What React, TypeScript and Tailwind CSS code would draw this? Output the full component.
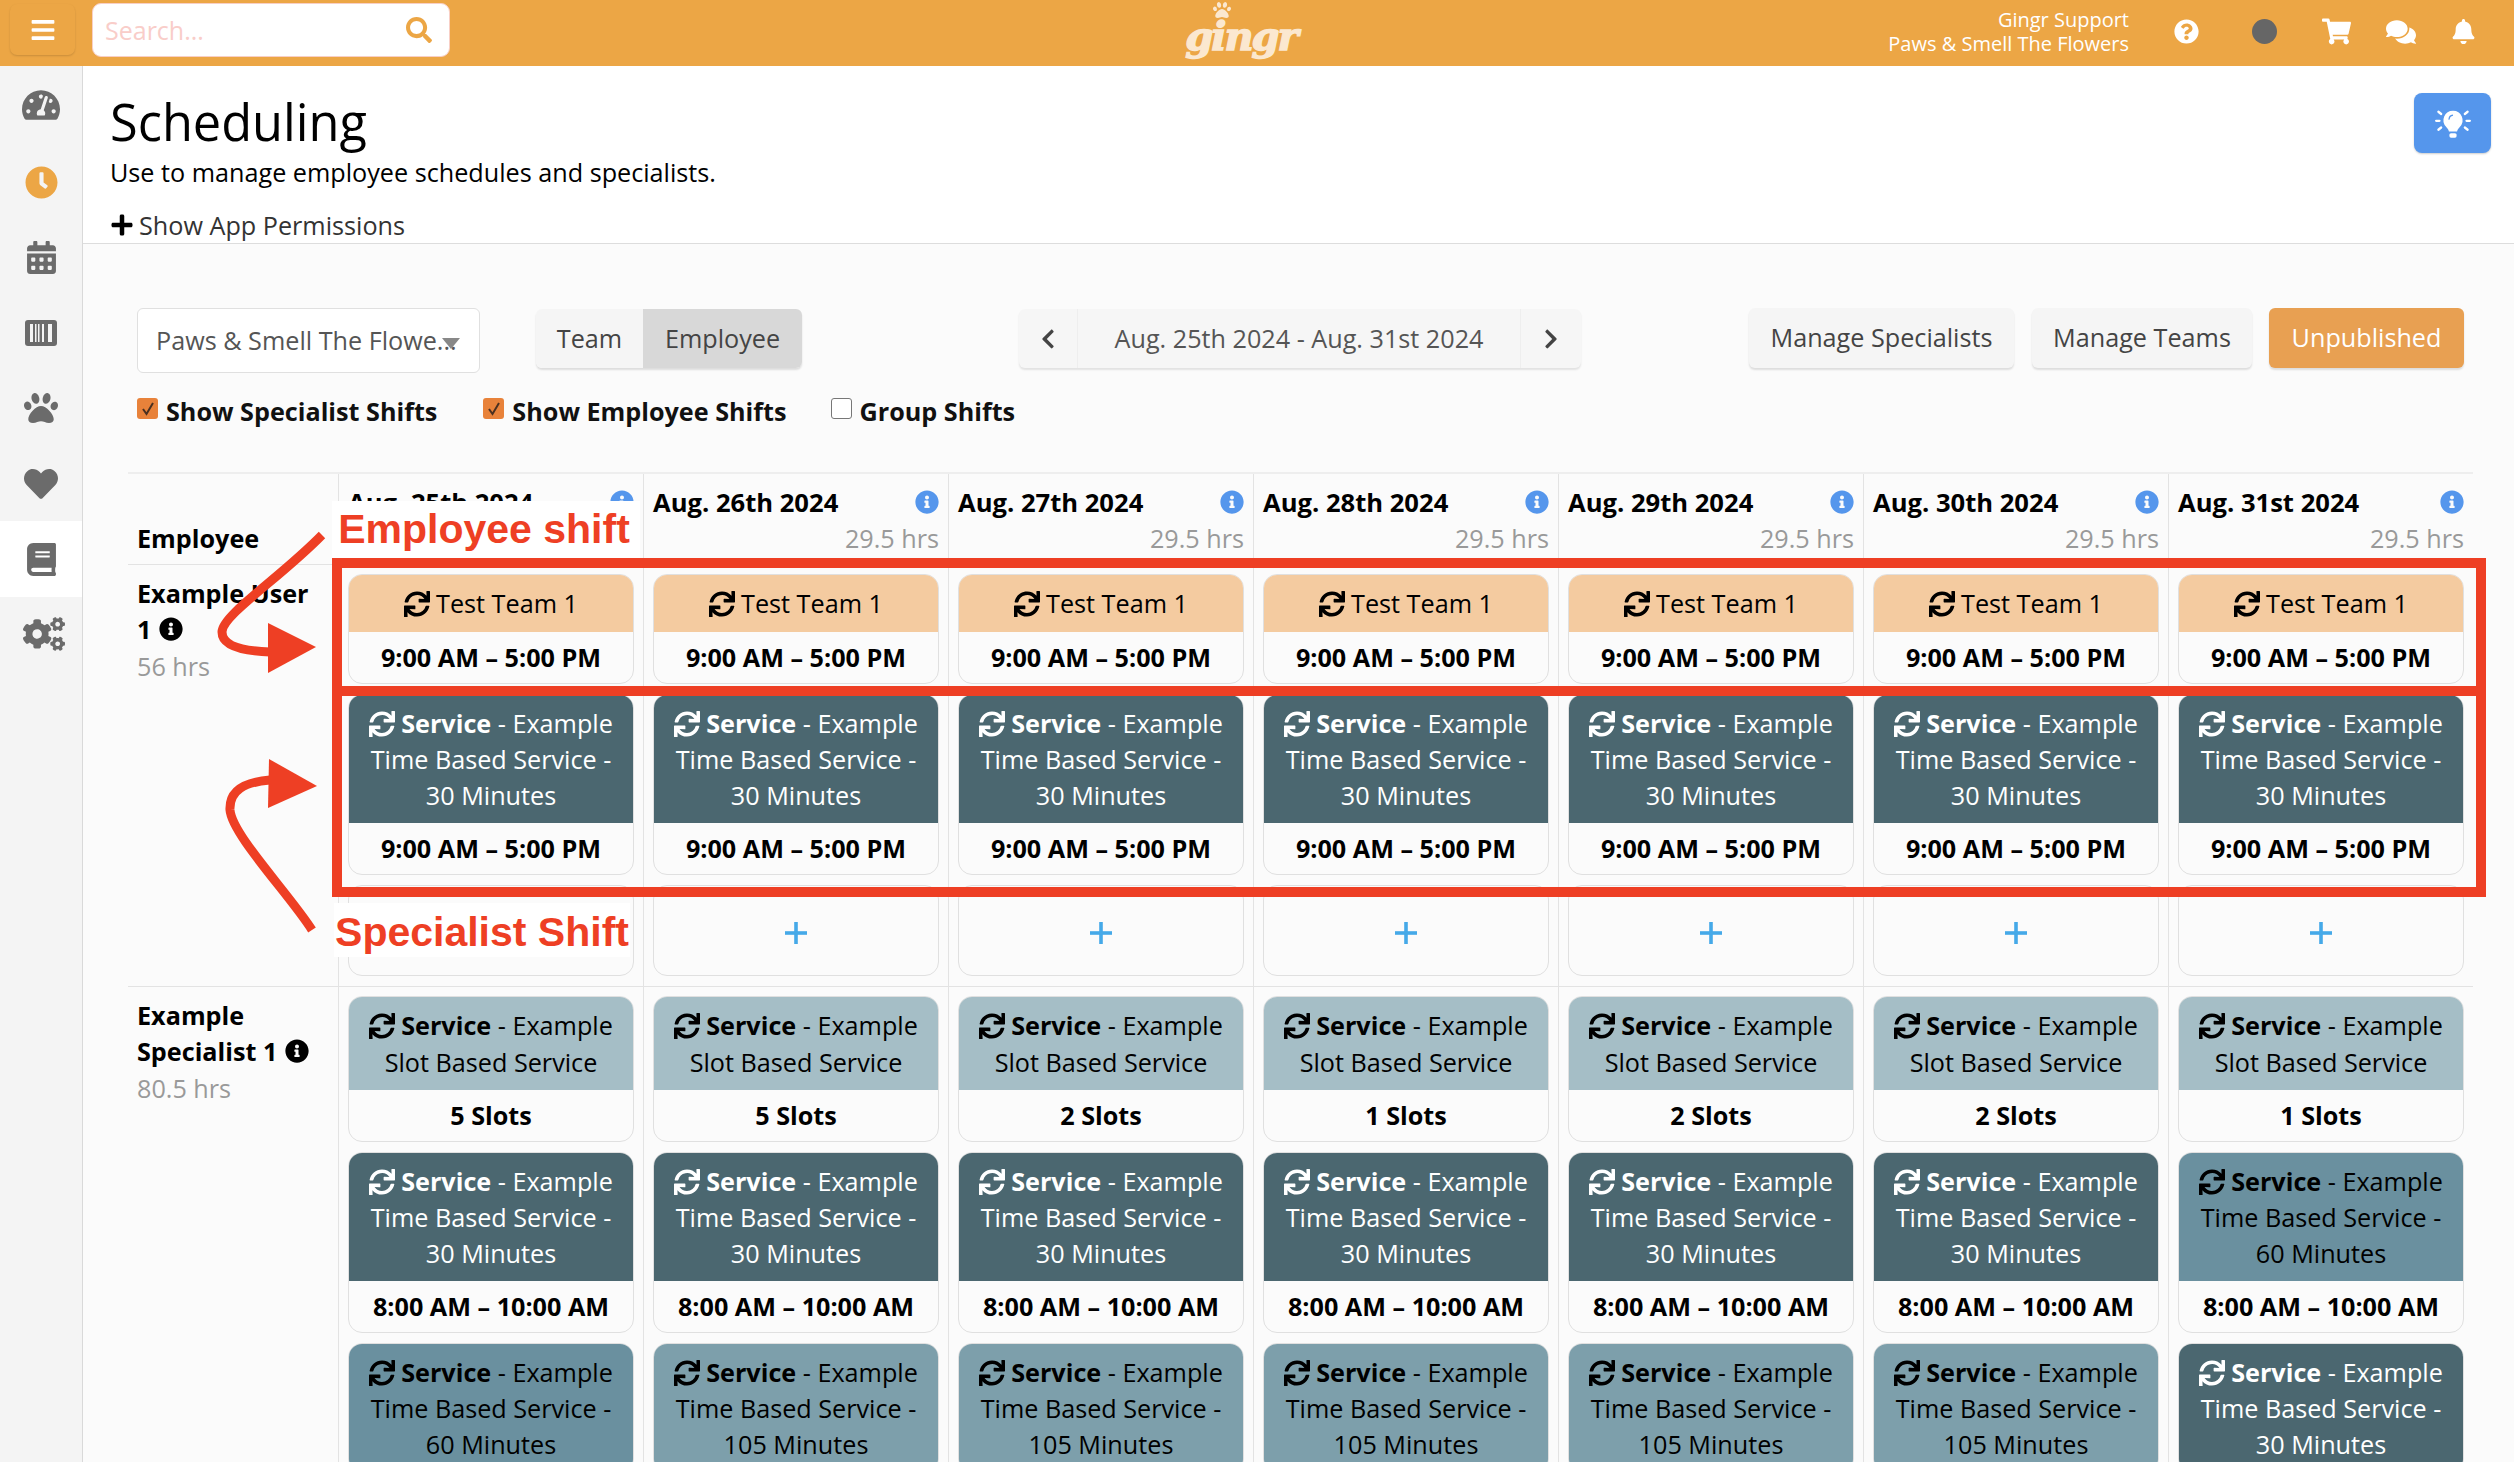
import React from 'react';
import {
  FaBars, FaBell, FaBook, FaCalendarAlt, FaChevronLeft, FaChevronRight, FaClock, FaCogs, FaComments,
  FaHeart, FaInfoCircle, FaPaw, FaPlus, FaQuestionCircle, FaSearch, FaShoppingCart, FaSync, FaTachometerAlt,
} from 'react-icons/fa';

const days = ['Aug. 25th 2024', 'Aug. 26th 2024', 'Aug. 27th 2024', 'Aug. 28th 2024', 'Aug. 29th 2024', 'Aug. 30th 2024', 'Aug. 31st 2024'];
const slots = [5, 5, 2, 1, 2, 2, 1];

const DARK = 'bg-[#4b6770] text-white';
const M60 = 'bg-[#6a909f] text-black';
const M105 = 'bg-[#7d9fab] text-black';
const SLOT = 'bg-[#a5bec6] text-black';

function Barcode() {
  return (
    <svg viewBox="0 0 32 26" className="w-[32px] h-[26px]">
      <rect width="32" height="26" rx="3" fill="#6b6b6b" />
      <g fill="#f4f4f4">
        <rect x="5" y="4" width="3" height="18" />
        <rect x="10" y="4" width="1.5" height="18" />
        <rect x="13" y="4" width="1.5" height="18" />
        <rect x="17" y="4" width="2" height="18" />
        <rect x="23" y="4" width="4" height="18" />
      </g>
    </svg>
  );
}

function Bulb() {
  return (
    <svg viewBox="0 0 32 32" className="w-[36px] h-[36px]" fill="white" stroke="white">
      <path stroke="none" d="M16 5a8.5 8.5 0 0 0-6 14.5c1.3 1.4 2.2 2.7 2.4 4h7.2c.2-1.3 1.1-2.6 2.4-4A8.5 8.5 0 0 0 16 5z" />
      <path stroke="#5596ec" strokeWidth="1.2" fill="none" d="M12.5 13a4 4 0 0 1 3.5-4" />
      <rect x="12.8" y="25" width="6.4" height="4" rx="1.5" stroke="none" />
      <g strokeWidth="2" strokeLinecap="round">
        <path d="M1 14h3M28 14h3M3 6l2.5 2M29 6l-2.5 2M3 22l2.5-2M29 22l-2.5-2" />
      </g>
    </svg>
  );
}

function ThinPlus() {
  return (
    <svg viewBox="0 0 22 22" className="w-[22px] h-[22px]" fill="#45a9e8">
      <rect x="9.2" y="0" width="3.6" height="22" />
      <rect x="0" y="9.2" width="22" height="3.6" />
    </svg>
  );
}

function Sidebar() {
  const item = 'h-[75.4px] flex items-center justify-center text-[#6b6b6b]';
  return (
    <aside className="w-[83px] shrink-0 bg-[#f4f4f4] border-r border-[#d9d9d9] pt-[3px]">
      <div className={`${item} pb-[4px]`}><FaTachometerAlt size={38} /></div>
      <div className={item}><FaClock size={33} className="text-[#eca645]" /></div>
      <div className={item}><FaCalendarAlt size={33} /></div>
      <div className={item}><Barcode /></div>
      <div className={item}><FaPaw size={34} /></div>
      <div className={item}><FaHeart size={34} /></div>
      <div className={`${item} bg-white`}><FaBook size={33} /></div>
      <div className={`${item} pl-[5px]`}><FaCogs size={42} /></div>
    </aside>
  );
}

function Header() {
  return (
    <header className="h-[66px] shrink-0 bg-[#eca645] grid grid-cols-[1fr_auto_1fr] items-center">
      <div className="flex items-center pl-[10px]">
        <button className="w-[65px] h-[51px] -mt-[7px] rounded-[7px] bg-[#eca645] shadow-[0_1px_2px_rgba(0,0,0,0.15)] flex items-center justify-center text-white">
          <FaBars size={26} />
        </button>
        <div className="ml-[17px] -mt-[6px] w-[358px] h-[54px] rounded-[9px] bg-white border border-[#f8cfc6] flex items-center justify-between pl-[12px] pr-[17px]">
          <span className="text-[25px] text-[#f9cdc9] mt-[2px]">Search...</span>
          <FaSearch size={26} className="text-[#eca645]" />
        </div>
      </div>
      <div className="relative mr-[32px] w-[118px] h-[66px] flex items-center justify-center">
        <FaPaw size={18} className="absolute left-[31px] top-[1px] text-[#fbe8d0]" />
        <span className="font-['DejaVu_Serif',serif] font-bold italic text-[40px] leading-none text-[#fbe8d0] mt-[6px] tracking-[-2px] [-webkit-text-stroke:1.5px_#fbe8d0]">gingr</span>
      </div>
      <div className="flex items-center justify-end text-white pr-[38px] -mt-[3px]">
        <div className="text-right text-[20px] leading-[24px] mr-[45px] mt-[1px]">
          <div>Gingr Support</div>
          <div>Paws &amp; Smell The Flowers</div>
        </div>
        <FaQuestionCircle size={25} />
        <div className="ml-[53px] w-[25px] h-[25px] rounded-full bg-[#666666]" />
        <FaShoppingCart size={29} className="ml-[45px]" />
        <FaComments size={30} className="ml-[35px]" />
        <FaBell size={25} className="ml-[35px]" />
      </div>
    </header>
  );
}

function Check({ on, label }: { on: boolean; label: string }) {
  return (
    <label className="flex items-center gap-[8px]">
      {on ? (
        <span className="w-[21px] h-[21px] -mt-[5px] rounded-[3px] bg-[#e8823a] flex items-center justify-center">
          <svg viewBox="0 0 16 16" className="w-[16px] h-[16px]"><path d="M3 8l3.5 5L13 2" fill="none" stroke="#4a3020" strokeWidth="2" /></svg>
        </span>
      ) : (
        <span className="w-[21px] h-[21px] -mt-[5px] rounded-[3px] bg-white border border-[#777777]" />
      )}
      <span className="text-[25.2px] font-bold leading-[30px] text-[#111111]">{label}</span>
    </label>
  );
}

function Controls() {
  const btn = 'h-[60px] rounded-[6px] bg-[#f5f5f5] shadow-[0_2px_2px_rgba(0,0,0,0.12)] flex items-center justify-center text-[25.2px] text-[#444444]';
  return (
    <div className="pl-[9px]">
      <div className="flex items-start">
        <div className="relative w-[343px] h-[65px] bg-white border border-[#e0e0e0] rounded-[6px] flex items-center pl-[18px] text-[25.2px] text-[#555555] whitespace-nowrap">
          Paws &amp; Smell The Flowe...
          <span className="absolute left-[304px] top-[29px] border-x-[9px] border-x-transparent border-t-[11px] border-t-[#888888]" />
        </div>
        <div className="ml-[56px] w-[266px] h-[59px] mt-[1px] flex rounded-[6px] overflow-hidden shadow-[0_2px_2px_rgba(0,0,0,0.12)] text-[25.2px] text-[#444444]">
          <div className="w-[107px] bg-[#f5f5f5] flex items-center justify-center">Team</div>
          <div className="flex-1 bg-[#d8d8d8] flex items-center justify-center">Employee</div>
        </div>
        <div className="ml-[217px] w-[562px] h-[59px] mt-[1px] flex rounded-[6px] bg-[#f6f6f6] shadow-[0_2px_2px_rgba(0,0,0,0.1)] text-[#444444]">
          <div className="w-[58px] flex items-center justify-center"><FaChevronLeft size={22} /></div>
          <div className="flex-1 border-x border-[#eeeeee] flex items-center justify-center text-[25.2px] text-[#555555]">Aug. 25th 2024 - Aug. 31st 2024</div>
          <div className="w-[60px] flex items-center justify-center"><FaChevronRight size={22} /></div>
        </div>
        <div className={`${btn} ml-[168px] w-[265px]`}>Manage Specialists</div>
        <div className={`${btn} ml-[18px] w-[220px]`}>Manage Teams</div>
        <div className={`${btn} ml-[17px] w-[195px] !bg-[#e8a052] !text-white`}>Unpublished</div>
      </div>
      <div className="mt-[23px] flex items-center">
        <Check on label="Show Specialist Shifts" />
        <div className="ml-[46px]"><Check on label="Show Employee Shifts" /></div>
        <div className="ml-[44px]"><Check on={false} label="Group Shifts" /></div>
      </div>
    </div>
  );
}

function Card({ lines, tone, children, footer }: { lines: 1 | 2 | 3; tone: string; children: React.ReactNode; footer?: string }) {
  const h = lines === 1 ? 'h-[57px]' : lines === 2 ? 'h-[93px]' : 'h-[128px]';
  return (
    <div className="rounded-[14px] border border-[#e0e0e0] overflow-hidden shrink-0">
      <div className={`${h} ${tone} flex items-center justify-center text-center text-[25.2px] leading-[36.2px] px-[3px]`}>
        <div>
          <FaSync size={26} className="inline-block align-[-4px] mr-[6px]" />
          {children}
        </div>
      </div>
      {footer && <div className="h-[51px] flex items-center justify-center text-[25.2px] font-bold text-black">{footer}</div>}
    </div>
  );
}

function Cell({ children }: { children: React.ReactNode }) {
  return <div className="border-l border-[#e3e3e3] pl-[9px] pr-[9px] pt-[9px] pb-[10px] flex flex-col gap-[10px]">{children}</div>;
}

function Rows() {
  const grid = 'grid grid-cols-[210px_repeat(7,305px)] border-b border-[#e3e3e3]';
  return (
    <div className="mt-[46px] border-t-2 border-[#eeeeee] w-[2345px]">
      <div className={`${grid} h-[91px]`}>
        <div className="pl-[9px] pt-[46px] text-[25.2px] font-bold leading-[36px] text-black">Employee</div>
        {days.map((d) => (
          <div key={d} className="border-l border-[#e3e3e3] pl-[9px] pr-[9px] pt-[11px]">
            <div className="flex justify-between items-center">
              <span className="text-[25.6px] font-bold leading-[36px] text-black">{d}</span>
              <FaInfoCircle size={24} className="text-[#5596ec] -mt-[3px]" />
            </div>
            <div className="-mt-[1px] text-right text-[25.2px] leading-[36px] text-[#999999]">29.5 hrs</div>
          </div>
        ))}
      </div>

      <div className={grid}>
        <div className="pl-[9px] pt-[10px] text-[25.2px] leading-[36px] text-black font-bold">
          <div>Example User</div>
          <div className="flex items-center gap-[8px]">1 <FaInfoCircle size={24} /></div>
          <div className="font-normal text-[#999999] mt-[1px]">56 hrs</div>
        </div>
        {days.map((d) => (
          <Cell key={d}>
            <Card lines={1} tone="bg-[#f4cba0] text-black" footer="9:00 AM – 5:00 PM">
              Test Team 1
            </Card>
            <Card lines={3} tone={DARK} footer="9:00 AM – 5:00 PM">
              <b className="font-bold">Service</b> - Example
              <br />
              Time Based Service -
              <br />
              30 Minutes
            </Card>
            <div className="h-[91px] rounded-[14px] border border-[#e0e0e0] pt-[5px] flex items-center justify-center">
              <ThinPlus />
            </div>
          </Cell>
        ))}
      </div>

      <div className="grid grid-cols-[210px_repeat(7,305px)]">
        <div className="pl-[9px] pt-[10px] text-[25.2px] leading-[36px] text-black font-bold">
          <div>Example</div>
          <div className="flex items-center gap-[8px]">Specialist 1 <FaInfoCircle size={24} /></div>
          <div className="font-normal text-[#999999] mt-[1px]">80.5 hrs</div>
        </div>
        {days.map((d, i) => (
          <Cell key={d}>
            <Card lines={2} tone={SLOT} footer={`${slots[i]} Slots`}>
              <b className="font-bold">Service</b> - Example
              <br />
              Slot Based Service
            </Card>
            <Card lines={3} tone={i === 6 ? M60 : DARK} footer="8:00 AM – 10:00 AM">
              <b className="font-bold">Service</b> - Example
              <br />
              Time Based Service -
              <br />
              {i === 6 ? '60 Minutes' : '30 Minutes'}
            </Card>
            <Card lines={3} tone={i === 0 ? M60 : i === 6 ? DARK : M105}>
              <b className="font-bold">Service</b> - Example
              <br />
              Time Based Service -
              <br />
              {i === 0 ? '60 Minutes' : i === 6 ? '30 Minutes' : '105 Minutes'}
            </Card>
          </Cell>
        ))}
      </div>
    </div>
  );
}

// red markup that was drawn on top of the screenshot
function Annotations() {
  const label = "absolute bg-white flex items-center justify-center font-['Liberation_Sans',sans-serif] font-bold text-[#ee3f24] whitespace-nowrap text-[41px]";
  return (
    <>
      <div className={`${label} left-[332px] top-[501px] w-[308px] h-[57px] pr-[4px] pt-[1px]`}>Employee shift</div>
      <div className={`${label} left-[334px] top-[903px] w-[296px] h-[54px] pt-[5px]`}>Specialist Shift</div>
      <div className="absolute left-[332px] top-[558px] w-[2154px] h-[138px] border-[10px] border-[#ee3f24]" />
      <div className="absolute left-[332px] top-[686px] w-[2154px] h-[211px] border-[10px] border-[#ee3f24]" />
      <svg className="absolute left-0 top-0 w-[400px] h-[960px]" viewBox="0 0 400 960" fill="none">
        <path d="M322 535C280 578 222 615 222 632C222 645 240 651 270 652" stroke="#ee3f24" strokeWidth="9" />
        <path d="M268 623L316 647L268 673Z" fill="#ee3f24" />
        <path d="M312 930C290 895 232 835 230 810C229 790 245 782 270 780" stroke="#ee3f24" strokeWidth="9" />
        <path d="M269 759L317 786L268 808Z" fill="#ee3f24" />
      </svg>
    </>
  );
}

export default function App() {
  return (
    <div className="relative h-screen overflow-hidden flex flex-col font-['Open_Sans',sans-serif] bg-white">
      <Header />
      <div className="flex flex-1 min-h-0">
        <Sidebar />
        <main className="flex-1 min-w-0 flex flex-col">
          <section className="h-[178px] shrink-0 bg-white border-b border-[#dddddd] flex justify-between pl-[27px] pr-[23px]">
            <div className="pt-[28px]">
              <h1 className="text-[50.5px] leading-[56px] text-black">Scheduling</h1>
              <p className="mt-[4px] text-[25.2px] leading-[36px] text-black">Use to manage employee schedules and specialists.</p>
              <div className="mt-[18px] flex items-center gap-[5px] text-[25.2px] leading-[34px] text-[#333333]">
                <FaPlus size={24} className="text-black" /> Show App Permissions
              </div>
            </div>
            <button className="mt-[27px] w-[77px] h-[60px] rounded-[8px] bg-[#5596ec] shadow-[0_1px_2px_rgba(0,0,0,0.2)] flex items-center justify-center">
              <Bulb />
            </button>
          </section>
          <div className="flex-1 bg-[#fbfbfb] pl-[45px] pt-[64px]">
            <Controls />
            <Rows />
          </div>
        </main>
      </div>
      <Annotations />
    </div>
  );
}
